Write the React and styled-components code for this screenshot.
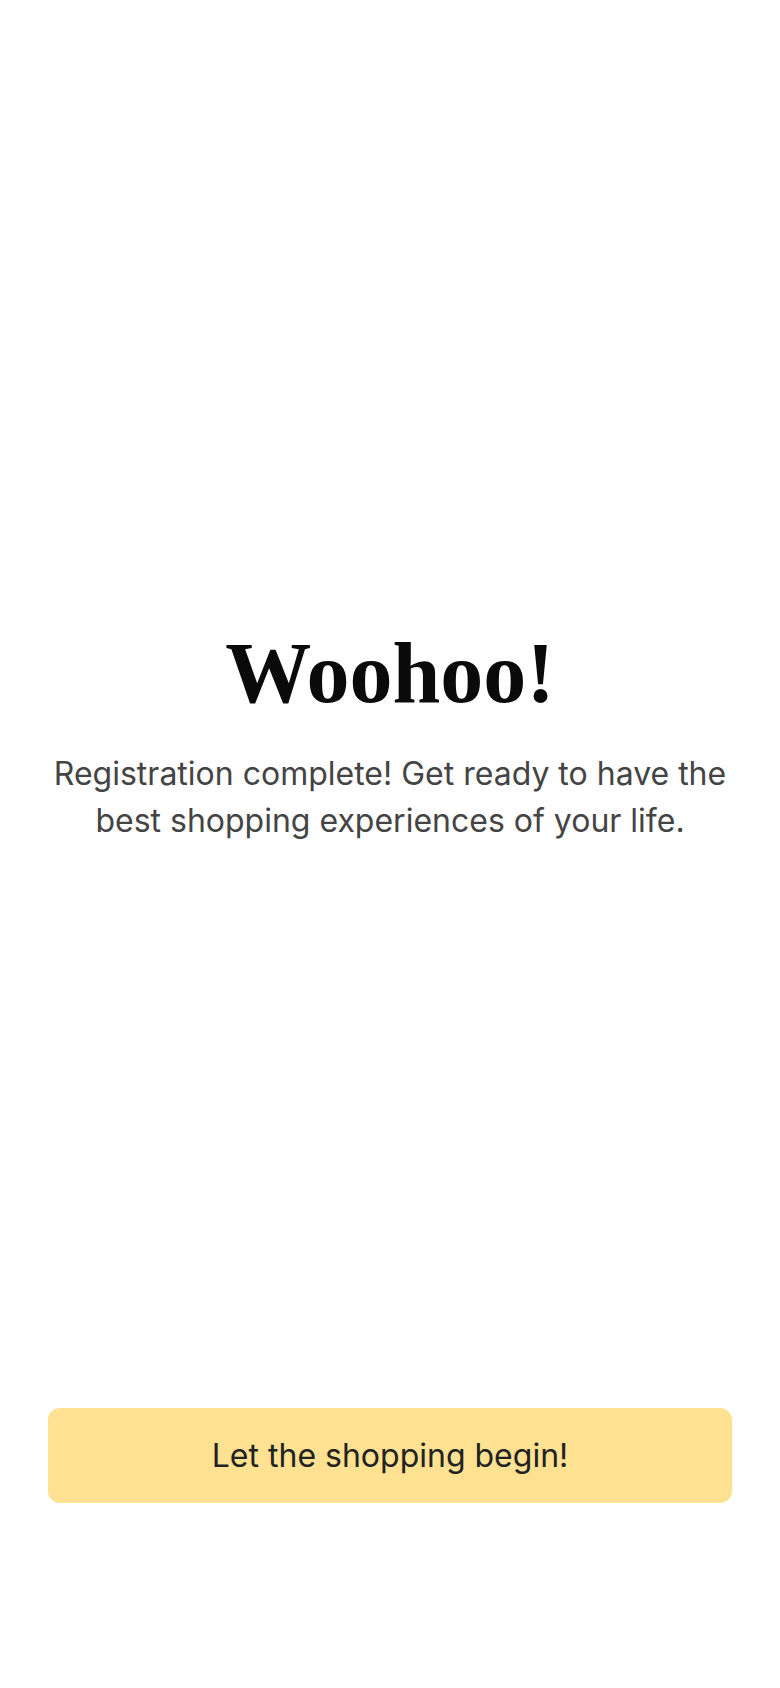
import React from "react";
import styled, { createGlobalStyle } from "styled-components";

const Global = createGlobalStyle`
  html, body { margin: 0; padding: 0; background: #ffffff; }
  body { font-family: Inter, "Noto Sans", sans-serif; }
  * { box-sizing: border-box; }
`;

const Screen = styled.div`
  min-height: 1688px;
  display: flex;
  flex-direction: column;
  background: #ffffff;
`;

const Content = styled.main`
  flex: 1;
  display: flex;
  flex-direction: column;
  align-items: center;
  justify-content: center;
  padding: 58px 44px 0;
  text-align: center;
`;

const Title = styled.h1`
  margin: 0;
  font-family: "Liberation Serif", "Times New Roman", serif;
  font-weight: 700;
  font-size: 86px;
  line-height: 1.2;
  color: #0a0a0a;
`;

const Message = styled.p`
  margin: 24px 0 0;
  font-family: Inter, sans-serif;
  font-size: 32px;
  line-height: 47px;
  color: #444444;
`;

const Footer = styled.footer`
  padding: 0 48px 185px;
`;

const PrimaryButton = styled.button`
  display: block;
  width: 100%;
  height: 95px;
  border: none;
  border-radius: 12px;
  background: #fee191;
  color: #222222;
  font-family: Inter, sans-serif;
  font-size: 32px;
  cursor: pointer;
`;

export default function App() {
  return (
    <>
      <Global />
      <Screen>
        <Content>
          <Title>Woohoo!</Title>
          <Message>
            Registration complete! Get ready to have the best shopping experiences of your life.
          </Message>
        </Content>
        <Footer>
          <PrimaryButton>Let the shopping begin!</PrimaryButton>
        </Footer>
      </Screen>
    </>
  );
}
